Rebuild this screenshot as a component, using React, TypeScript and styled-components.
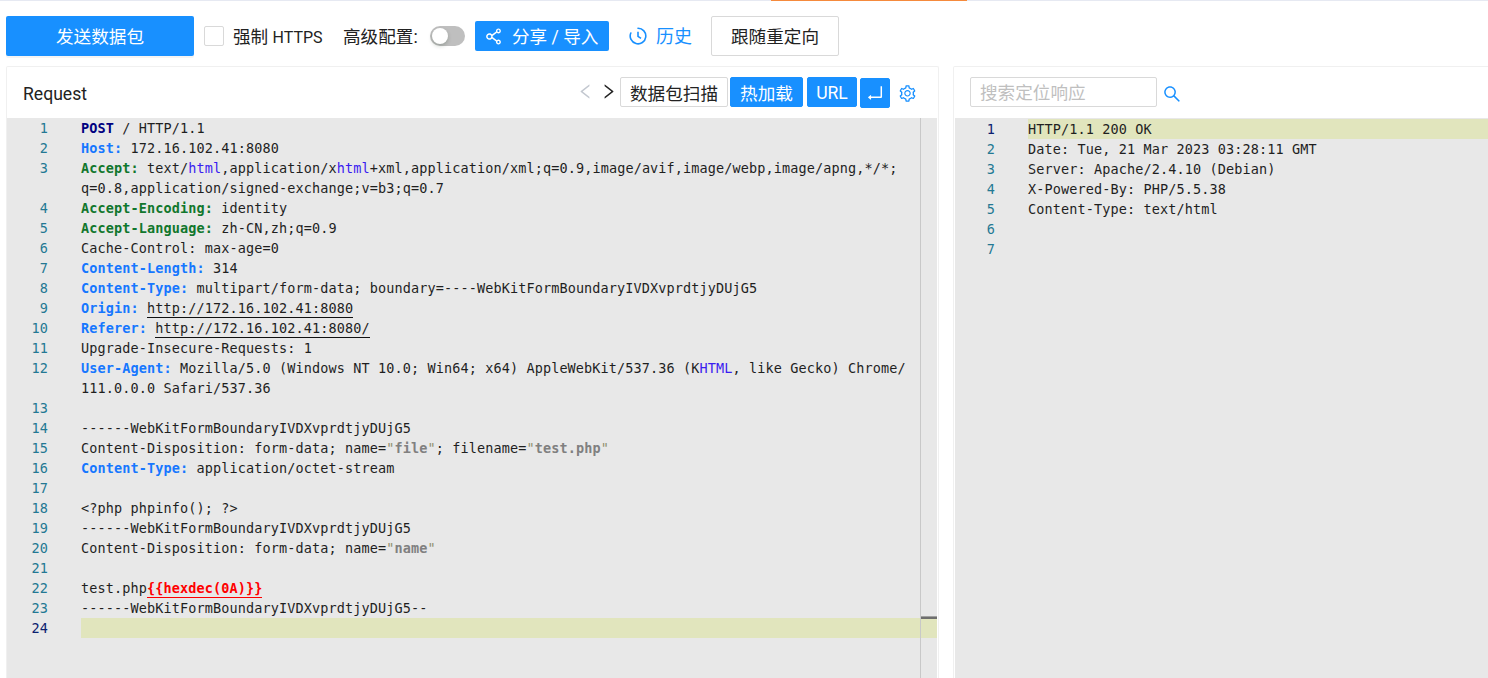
import React from "react";
import styled, { createGlobalStyle } from "styled-components";
import {
  AiOutlineEnter,
  AiOutlineLeft,
  AiOutlineRight,
  AiOutlineSearch,
  AiOutlineSetting,
  AiOutlineShareAlt,
} from "react-icons/ai";

const GlobalStyle = createGlobalStyle`
  html, body {
    margin: 0;
    height: 100%;
    overflow: hidden;
    background: #fff;
  }
  body {
    font-family: Roboto, "Noto Sans CJK SC", sans-serif;
    font-size: 17.6px;
    color: #222;
  }
`;

const Page = styled.div`
  height: 678px;
  display: flex;
  flex-direction: column;
  overflow: hidden;
`;

const TopStrip = styled.div`
  height: 1px;
  padding-left: 771px;
  background: #e6e9f2;
  flex: none;
`;

const Progress = styled.div`
  width: 196px;
  height: 1px;
  background: #f58a3c;
`;

const Toolbar = styled.div`
  display: flex;
  align-items: center;
  height: 40px;
  margin: 15px 0 10px;
  padding-left: 6px;
  flex: none;
`;

const SendButton = styled.button`
  width: 188px;
  height: 40px;
  border: 0;
  border-radius: 2px;
  background: #1890ff;
  color: #fff;
  font: inherit;
  box-shadow: 0 2px 0 rgba(0, 0, 0, 0.045);
  padding: 0 0 2px;
`;

const CheckBox = styled.span`
  width: 20px;
  height: 20px;
  box-sizing: border-box;
  margin-left: 10px;
  border: 1px solid #d9d9d9;
  border-radius: 2px;
  background: #fff;
`;

const Label = styled.span<{ $width: number; $left: number }>`
  width: ${(p) => p.$width}px;
  margin-left: ${(p) => p.$left}px;
  padding-top: 2px;
  white-space: nowrap;
  line-height: 24px;
`;

const Latin = styled.span`
  font-size: 16px;
`;

const Switch = styled.span`
  width: 35px;
  height: 20px;
  margin-left: 10px;
  padding: 2px;
  box-sizing: border-box;
  border-radius: 10px;
  background: #bfbfbf;
  display: flex;
`;

const Knob = styled.span`
  width: 16px;
  height: 16px;
  border-radius: 50%;
  background: #fff;
  box-shadow: 0 2px 4px rgba(0, 35, 11, 0.2);
`;

const ShareButton = styled.button`
  display: flex;
  align-items: center;
  width: 134px;
  height: 30px;
  margin-left: 10px;
  padding: 0 0 2px 8px;
  border: 0;
  border-radius: 2px;
  background: #1890ff;
  color: #fff;
  font: inherit;
  white-space: nowrap;

  svg {
    font-size: 21px;
    margin: 2px 8px 0 0;
  }
`;

const HistoryLink = styled.span`
  display: flex;
  align-items: center;
  margin-left: 20px;
  padding-bottom: 2px;
  color: #1890ff;
  font-size: 18px;

  svg {
    margin: 2px 9px 0 0;
  }
`;

const GhostButton = styled.button`
  width: 128px;
  height: 40px;
  margin-left: 19px;
  padding: 0 0 2px;
  box-sizing: border-box;
  border: 1px solid #d9d9d9;
  border-radius: 2px;
  background: #fff;
  color: #222;
  font: inherit;
`;

const Panels = styled.div`
  flex: 1;
  min-height: 0;
  display: flex;
  padding-left: 6px;
  gap: 14px;
`;

const Card = styled.section<{ $width: number }>`
  width: ${(p) => p.$width}px;
  flex: none;
  box-sizing: border-box;
  border: 1px solid #f0f0f0;
  border-bottom: 0;
  border-radius: 2px 2px 0 0;
  display: flex;
  flex-direction: column;
  background: #fff;
`;

const CardHead = styled.header<{ $left: number }>`
  height: 51px;
  box-sizing: border-box;
  padding: 0 0 2px ${(p) => p.$left}px;
  flex: none;
  display: flex;
  align-items: center;
`;

const Title = styled.h2`
  margin: 4px 0 0 1px;
  font-size: 17.6px;
  font-weight: 400;
  color: #222;
`;

const HeadTools = styled.div`
  margin-left: auto;
  display: flex;
  align-items: center;
  padding-right: 21px;
`;

const Arrow = styled.span<{ $off?: boolean }>`
  display: flex;
  font-size: 19px;
  margin: 0 2px;
  color: ${(p) => (p.$off ? "#c3c8d0" : "#222")};
`;

const SmallButton = styled.button<{ $primary?: boolean; $width: number; $gap?: number }>`
  width: ${(p) => p.$width}px;
  height: 30px;
  margin-right: ${(p) => p.$gap ?? 4}px;
  padding: 2px 0 0;
  box-sizing: border-box;
  border: 1px solid ${(p) => (p.$primary ? "#1890ff" : "#d9d9d9")};
  border-radius: 2px;
  background: ${(p) => (p.$primary ? "#1890ff" : "#fff")};
  color: ${(p) => (p.$primary ? "#fff" : "#222")};
  font: inherit;
  display: flex;
  align-items: center;
  justify-content: center;
  white-space: nowrap;
`;

const EnterButton = styled(SmallButton)`
  margin-top: 2px;
  padding: 0;
  font-size: 20px;
`;

const GearIcon = styled(AiOutlineSetting)`
  font-size: 19px;
  color: #1890ff;
  margin: 3px 0 0 4px;
`;

const SearchInput = styled.div`
  width: 187px;
  height: 30px;
  box-sizing: border-box;
  border: 1px solid #d9d9d9;
  border-radius: 2px;
  padding-left: 9px;
  color: #bfbfbf;
  line-height: 30px;
`;

const SearchIcon = styled(AiOutlineSearch)`
  font-size: 20px;
  color: #1890ff;
  margin: 5px 0 0 5px;
`;

const Editor = styled.div<{ $top: number; $side: "left" | "right" }>`
  position: relative;
  flex: 1;
  min-height: 0;
  margin-${(p) => p.$side}: 1px;
  padding-top: ${(p) => p.$top}px;
  background: #e8e8e8;
  overflow: hidden;
  font-family: "DejaVu Sans Mono", monospace;
  font-size: 13.5px;
  letter-spacing: 0.12px;
  line-height: 20px;
  color: #1f1f1f;
`;

const Row = styled.div<{ $gutter: number }>`
  display: grid;
  grid-template-columns: ${(p) => p.$gutter}px 1fr;
  min-height: 20px;
`;

const LineNo = styled.span<{ $active?: boolean; $pad: number }>`
  padding-right: ${(p) => p.$pad}px;
  text-align: right;
  color: ${(p) => (p.$active ? "#0b216f" : "#237893")};
`;

const LineText = styled.span<{ $active?: boolean }>`
  white-space: pre;
  background: ${(p) => (p.$active ? "#e1e5bd" : "transparent")};
`;

const Method = styled.b`
  color: #000080;
`;

const Key = styled.b<{ $green?: boolean }>`
  color: ${(p) => (p.$green ? "#11772d" : "#1677ff")};
`;

const Mime = styled.span`
  color: #3a1cf0;
`;

const Link = styled.span`
  display: inline-block;
  height: 20px;
  box-sizing: border-box;
  border-bottom: 1px solid #111;
`;

const Tag = styled.b`
  display: inline-block;
  height: 20px;
  box-sizing: border-box;
  color: #f00;
  border-bottom: 1px solid #f00;
`;

const Quote = styled.span`
  color: #8f8f6e;
`;

const Quoted = styled.b`
  color: #808080;
`;

const Ruler = styled.div`
  position: absolute;
  top: 0;
  bottom: 0;
  right: 16px;
  width: 1px;
  background: #c8c8c8;
`;

const CursorMark = styled.div`
  position: absolute;
  top: 498px;
  right: 0;
  width: 16px;
  height: 3px;
  background: linear-gradient(#a0a0a0 1px, #6e6e6e 1px);
`;

const ClockIcon = () => (
  <svg width="18" height="18" viewBox="0 0 18 18" fill="none" stroke="currentColor" strokeWidth="1.6">
    <path d="M9 1.2a7.8 7.8 0 1 1-7.2 4.8" strokeLinecap="round" />
    <path d="M9 4.8V9.4l3 2" />
  </svg>
);

const request: React.ReactNode[] = [
  <><Method>POST</Method> / HTTP/1.1</>,
  <><Key>Host:</Key> 172.16.102.41:8080</>,
  <>
    <Key $green>Accept:</Key> text/<Mime>html</Mime>,application/x<Mime>html</Mime>+xml,application/xml;q=0.9,image/avif,image/webp,image/apng,*/*;
    <br />
    q=0.8,application/signed-exchange;v=b3;q=0.7
  </>,
  <><Key $green>Accept-Encoding:</Key> identity</>,
  <><Key $green>Accept-Language:</Key> zh-CN,zh;q=0.9</>,
  "Cache-Control: max-age=0",
  <><Key>Content-Length:</Key> 314</>,
  <><Key>Content-Type:</Key> multipart/form-data; boundary=----WebKitFormBoundaryIVDXvprdtjyDUjG5</>,
  <><Key>Origin:</Key> <Link>http://172.16.102.41:8080</Link></>,
  <><Key>Referer:</Key> <Link>http://172.16.102.41:8080/</Link></>,
  "Upgrade-Insecure-Requests: 1",
  <>
    <Key>User-Agent:</Key> Mozilla/5.0 (Windows NT 10.0; Win64; x64) AppleWebKit/537.36 (K<Mime>HTML</Mime>, like Gecko) Chrome/
    <br />
    111.0.0.0 Safari/537.36
  </>,
  "",
  "------WebKitFormBoundaryIVDXvprdtjyDUjG5",
  <>
    Content-Disposition: form-data; name=<Quote>"</Quote><Quoted>file</Quoted><Quote>"</Quote>; filename=<Quote>"</Quote><Quoted>test.php</Quoted><Quote>"</Quote>
  </>,
  <><Key>Content-Type:</Key> application/octet-stream</>,
  "",
  "<?php phpinfo(); ?>",
  "------WebKitFormBoundaryIVDXvprdtjyDUjG5",
  <>Content-Disposition: form-data; name=<Quote>"</Quote><Quoted>name</Quoted><Quote>"</Quote></>,
  "",
  <>test.php<Tag>{"{{hexdec(0A)}}"}</Tag></>,
  "------WebKitFormBoundaryIVDXvprdtjyDUjG5--",
  "",
];

const response: React.ReactNode[] = [
  "HTTP/1.1 200 OK",
  "Date: Tue, 21 Mar 2023 03:28:11 GMT",
  "Server: Apache/2.4.10 (Debian)",
  "X-Powered-By: PHP/5.5.38",
  "Content-Type: text/html",
  "",
  "",
];

const CodeLines = ({
  lines,
  active,
  gutter,
  pad,
}: {
  lines: React.ReactNode[];
  active: number;
  gutter: number;
  pad: number;
}) => (
  <>
    {lines.map((line, i) => (
      <Row $gutter={gutter} key={i}>
        <LineNo $active={i === active} $pad={pad}>
          {i + 1}
        </LineNo>
        <LineText $active={i === active}>{line}</LineText>
      </Row>
    ))}
  </>
);

export default function App() {
  return (
    <Page>
      <GlobalStyle />
      <TopStrip>
        <Progress />
      </TopStrip>
      <Toolbar>
        <SendButton>发送数据包</SendButton>
        <CheckBox />
        <Label $width={91} $left={9}>强制 <Latin>HTTPS</Latin></Label>
        <Label $width={77} $left={19}>高级配置:</Label>
        <Switch>
          <Knob />
        </Switch>
        <ShareButton>
          <AiOutlineShareAlt />
          分享 / 导入
        </ShareButton>
        <HistoryLink>
          <ClockIcon />
          历史
        </HistoryLink>
        <GhostButton>跟随重定向</GhostButton>
      </Toolbar>
      <Panels>
        <Card $width={933}>
          <CardHead $left={15}>
            <Title>Request</Title>
            <HeadTools>
              <Arrow $off>
                <AiOutlineLeft />
              </Arrow>
              <Arrow>
                <AiOutlineRight />
              </Arrow>
              <SmallButton $width={108} $gap={2}>数据包扫描</SmallButton>
              <SmallButton $primary $width={73}>热加载</SmallButton>
              <SmallButton $primary $width={50} $gap={3}>URL</SmallButton>
              <EnterButton $primary $width={30}>
                <AiOutlineEnter />
              </EnterButton>
              <GearIcon />
            </HeadTools>
          </CardHead>
          <Editor $top={0} $side="right">
            <CodeLines lines={request} active={23} gutter={74} pad={33} />
            <Ruler />
            <CursorMark />
          </Editor>
        </Card>
        <Card $width={540}>
          <CardHead $left={16}>
            <SearchInput>搜索定位响应</SearchInput>
            <SearchIcon />
          </CardHead>
          <Editor $top={1} $side="left">
            <CodeLines lines={response} active={0} gutter={73} pad={33} />
          </Editor>
        </Card>
      </Panels>
    </Page>
  );
}
